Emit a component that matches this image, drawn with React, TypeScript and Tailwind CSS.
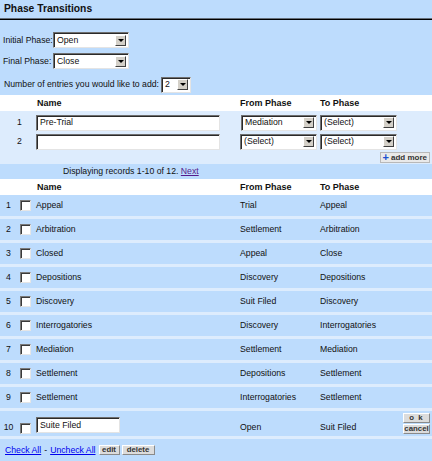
import * as React from 'react';

const rows = [
  { name: 'Appeal', from: 'Trial', to: 'Appeal' },
  { name: 'Arbitration', from: 'Settlement', to: 'Arbitration' },
  { name: 'Closed', from: 'Appeal', to: 'Close' },
  { name: 'Depositions', from: 'Discovery', to: 'Depositions' },
  { name: 'Discovery', from: 'Suit Filed', to: 'Discovery' },
  { name: 'Interrogatories', from: 'Discovery', to: 'Interrogatories' },
  { name: 'Mediation', from: 'Settlement', to: 'Mediation' },
  { name: 'Settlement', from: 'Depositions', to: 'Settlement' },
  { name: 'Settlement', from: 'Interrogatories', to: 'Settlement' },
];

function Select({ value, className }: { value: string; className: string }) {
  return (
    <div
      className={`flex items-center h-[16px] bg-white border border-t-[#6f6f6f] border-l-[#6f6f6f] border-r-[#e4e4e4] border-b-[#e4e4e4] shadow-[inset_1px_1px_0_#2a2a2a] pl-[3px] pr-[2px] ${className}`}
    >
      <span className="flex-1 text-[8.7px] leading-[11px] text-[#111] whitespace-nowrap">{value}</span>
      <div className="w-[11px] h-[11px] flex items-center justify-center bg-[#d4d0c8] border border-t-white border-l-white border-r-[#404040] border-b-[#404040]">
        <div className="w-0 h-0 border-x-[3px] border-x-transparent border-t-[3px] border-t-black" />
      </div>
    </div>
  );
}

function TextBox({ value, className }: { value: string; className: string }) {
  return (
    <div
      className={`flex items-center h-[16px] bg-white border border-t-[#6f6f6f] border-l-[#6f6f6f] border-r-[#e4e4e4] border-b-[#e4e4e4] shadow-[inset_1px_1px_0_#2a2a2a] pl-[3px] text-[8.7px] leading-[11px] text-[#111] ${className}`}
    >
      {value}
    </div>
  );
}

function Check() {
  return (
    <div className="w-[11px] h-[11px] bg-white border border-t-[#7a7a7a] border-l-[#7a7a7a] border-r-[#e6e6e6] border-b-[#e6e6e6] shadow-[inset_1px_1px_0_#3a3a3a]" />
  );
}

function Btn({ label, className = '' }: { label: string; className?: string }) {
  return (
    <div
      className={`flex items-center justify-center h-[10px] bg-[#dcdcdc] border border-t-white border-l-white border-r-[#8a8a8a] border-b-[#8a8a8a] text-[7.8px] leading-[8px] font-bold text-[#333] ${className}`}
    >
      {label}
    </div>
  );
}

function HeaderRow() {
  return (
    <div className="flex items-center h-[16px] bg-white text-[9px] font-bold text-[#111]">
      <div className="w-[37px]" />
      <div className="w-[203px]">Name</div>
      <div className="w-[80px]">From Phase</div>
      <div>To Phase</div>
    </div>
  );
}

export default function App() {
  return (
    <div className="w-[432px] h-[461px] overflow-hidden bg-[#bddcfd] font-['Liberation_Sans',Arial,sans-serif] text-[#111] text-[8.7px] leading-[11px]">
      <div className="h-[18px] flex items-center pl-[4px] pb-[2px] text-[10.3px] font-bold">Phase Transitions</div>
      <div className="h-[1px] bg-[#66707c]" />
      <div className="h-[1px] bg-black" />

      <div className="flex flex-col pt-[12px]">
        <div className="flex items-center h-[16px]">
          <div className="w-[53px] pl-[3px]">Initial Phase:</div>
          <Select value="Open" className="w-[76px]" />
        </div>
        <div className="flex items-center h-[16px] mt-[5px]">
          <div className="w-[53px] pl-[3px]">Final Phase:</div>
          <Select value="Close" className="w-[76px]" />
        </div>
        <div className="flex items-center h-[15px] mt-[8px]">
          <div className="w-[161px] pl-[4px]">Number of entries you would like to add:</div>
          <Select value="2" className="w-[30px] h-[15px]" />
        </div>
      </div>

      <div className="mt-[3px]">
        <HeaderRow />
        <div className="bg-[#ddecfd] pt-[3px] pb-[1px]">
          <div className="flex items-center h-[17px]">
            <div className="w-[36px] pl-[17px]">1</div>
            <TextBox value="Pre-Trial" className="w-[184px]" />
            <div className="w-[21px]" />
            <Select value="Mediation" className="w-[76px]" />
            <div className="w-[3px]" />
            <Select value="(Select)" className="w-[77px]" />
          </div>
          <div className="flex items-center h-[17px] mt-[2px]">
            <div className="w-[36px] pl-[17px]">2</div>
            <TextBox value="" className="w-[184px]" />
            <div className="w-[20px]" />
            <Select value="(Select)" className="w-[77px]" />
            <div className="w-[3px]" />
            <Select value="(Select)" className="w-[77px]" />
          </div>
          <div className="flex justify-end pr-[2px] mt-[2px]">
            <div className="flex items-center gap-[2px] h-[11px] px-[2px] bg-[#e9e9e9] border border-[#b8b8b8] text-[8px] font-bold text-[#333]">
              <span className="text-[#1a4fd0] text-[11px] leading-[9px] font-bold">+</span>
              <span>add more</span>
            </div>
          </div>
        </div>
      </div>

      <div className="h-[15px] flex items-center pl-[63px]">
        Displaying records 1-10 of 12.&nbsp;<span className="text-[#551a8b] underline">Next</span>
      </div>

      <HeaderRow />
      {rows.map((r, i) => (
        <div key={i} className="flex items-center h-[24px] border-b-[3px] border-[#ddecfd]">
          <div className="w-[17px] text-center">{i + 1}</div>
          <div className="w-[19px] pl-[3px]">
            <Check />
          </div>
          <div className="w-[204px]">{r.name}</div>
          <div className="w-[80px]">{r.from}</div>
          <div>{r.to}</div>
        </div>
      ))}
      <div className="flex items-start h-[28px] border-b-[3px] border-[#ddecfd]">
        <div className="w-[17px] text-center mt-[11px]">10</div>
        <div className="w-[19px] pl-[3px] mt-[12px]">
          <Check />
        </div>
        <TextBox value="Suite Filed" className="w-[84px] mt-[6px] h-[15px]" />
        <div className="w-[120px]" />
        <div className="w-[80px] mt-[11px]">Open</div>
        <div className="w-[83px] mt-[11px]">Suit Filed</div>
        <div className="flex flex-col gap-[1px] mt-[2px] w-[27px]">
          <Btn label="o k" className="tracking-[1px]" />
          <Btn label="cancel" />
        </div>
      </div>

      <div className="flex items-center h-[22px] pl-[5px]">
        <span className="text-[#0000ee] underline">Check All</span>
        <span className="mx-[3px]">-</span>
        <span className="text-[#0000ee] underline">Uncheck All</span>
        <Btn label="edit" className="ml-[3px] w-[21px]" />
        <Btn label="delete" className="ml-[2px] w-[33px]" />
      </div>
    </div>
  );
}
